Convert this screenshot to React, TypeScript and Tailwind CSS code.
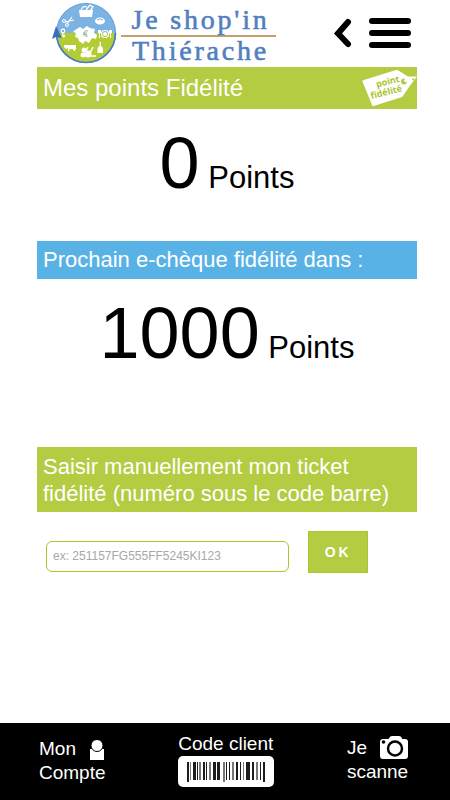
import React from 'react';

const bars: [number, number][] = [
  [0, 2], [3, 1], [6, 3], [10, 1], [12, 2], [16, 2], [19, 1], [22, 2], [26, 3],
  [30, 3], [36, 2], [39, 1], [42, 1], [45, 2], [49, 2], [53, 1], [56, 1], [59, 4],
  [65, 2], [69, 2], [73, 1], [76, 2],
];

function GlobeLogo() {
  return (
    <svg viewBox="0 0 68 66" className="h-[66px] w-[68px] shrink-0" aria-hidden="true">
      <path d="M7.500 33a29.500 29.500 0 0 1 59 0z" fill="#7db3e3" />
      <path d="M7.500 33a29.500 29.500 0 0 0 59 0z" fill="#b3cc35" />
      <circle cx="37" cy="33" r="29.500" fill="none" stroke="#6b9fd6" strokeWidth="1.200" />
      <path d="M7.500 33a29.500 29.500 0 0 0 59 0" fill="none" stroke="#4a7cc0" strokeWidth="1.600" />
      <path d="M7 26L3 39l4-2 6 1z" fill="#3c6fb7" />
      <g fill="#fff" stroke="#fff" transform="translate(2 0)">
        <path d="M24 30l5-3 3 2 4-3 3 2 5 1-1 4 3 2-1 4-4-1-3 5-4-2-2 3-4-3-1-3-3-1 1-4-3-1z" stroke="none" />
        <path d="M28 10h14l-1 7H29z" stroke="none" />
        <path d="M30 11q1-6 6-4M35 10l4-5 3 2-3 4" fill="none" strokeWidth="1.300" />
        <ellipse cx="49" cy="21" rx="5" ry="3.500" stroke="none" />
        <path d="M46 20q3-2 6 0" fill="none" stroke="#7db3e3" strokeWidth="1" />
        <circle cx="13" cy="21" r="1.500" fill="none" strokeWidth="1" />
        <circle cx="16" cy="25" r="1.500" fill="none" strokeWidth="1" />
        <path d="M14 22l9-2M16 24l5-7" fill="none" strokeWidth="1.200" />
        <circle cx="54" cy="34" r="3.500" fill="none" strokeWidth="1.200" />
        <circle cx="54" cy="34" r="2" stroke="none" />
        <path d="M48.500 30v8M59.500 30v8M47.500 30v3h2v-3M58.500 30v3h2v-3" fill="none" strokeWidth="1" />
        <circle cx="12" cy="31" r="1.800" fill="none" strokeWidth="1.200" />
        <path d="M12 33q-1 5 2 3M11 37l3-2" fill="none" strokeWidth="1.200" />
        <path d="M13 45h12v4l-1 1v1h-1.500v-2h-4v2H17v-3l-2 1-2-2z" stroke="none" />
        <path d="M48.500 42h1.500v4q2 1 2 3v4h-5.500v-4q0-2 2-3z" stroke="none" />
        <circle cx="33" cy="50" r="2.500" stroke="none" />
        <circle cx="37" cy="54" r="3.500" stroke="none" />
        <circle cx="32" cy="55" r="2.500" stroke="none" />
        <path d="M35 51l2-4M39 53l3-6M40 56h5" fill="none" strokeWidth="1.500" />
      </g>
      <path d="M39 31q-4-1-4 2.500t4 2.500M34 33h4M34 34.500h4" fill="none" stroke="#8cbca0" strokeWidth="1" />
    </svg>
  );
}

function TagIcon() {
  return (
    <svg viewBox="0 0 56 42" className="h-[42px] w-[56px] shrink-0" role="img" aria-label="point fidélité">
      <path d="M1.500 14.500q-.3-1 .7-1.300L35 3q1-.3 2 .2L47 9.500h9L48 20l-6 9q-.6 1-1.600 1.300L12.500 39q-1 .3-1.300-.6z" fill="#fff" />
      <circle cx="43" cy="14.500" r="3" fill="#b3cc42" />
      <circle cx="44.800" cy="13.500" r="1.700" fill="#fff" />
      <path d="M50.500 12.500l3-1.500-1 2.500z" fill="#a5c22d" />
      <g fill="#a8c52c" fontFamily="Open Sans, sans-serif" fontWeight="700" fontSize="9">
        <text transform="translate(16 20.500) rotate(-14)">point</text>
        <text transform="translate(10.500 32) rotate(-14)">fidélité</text>
      </g>
    </svg>
  );
}

function Points({ value }: { value: string }) {
  return (
    <p className="text-center text-[31px] leading-[84px]">
      <span className="text-[72px]">{value}</span> Points
    </p>
  );
}

export default function App() {
  return (
    <div className="flex min-h-screen flex-col bg-white font-['Liberation_Sans',Arial,sans-serif] text-black">
      <header className="flex h-[67px] items-start pr-[37px] pl-[49px]">
        <GlobeLogo />
        <h1 className="mt-1 ml-1 w-[155px] pl-1 text-center font-['Liberation_Serif',serif] text-[28px] tracking-widest whitespace-nowrap text-[#527fbe] [-webkit-text-stroke:0.6px_#527fbe]">
          <span className="-ml-1 block border-b-2 border-[#c5a06e] pl-1 leading-[31px]">Je shop'in</span>
          <span className="block leading-[28px]">Thiérache</span>
        </h1>
        <nav className="mt-4 ml-auto flex items-center gap-4">
          <button type="button" aria-label="Retour">
            <svg viewBox="0 0 20 34" className="h-[34px] w-5" fill="none" stroke="#000" strokeWidth="6" strokeLinecap="round" aria-hidden="true">
              <path d="M15 6L5 17.500L15 28" />
            </svg>
          </button>
          <button type="button" aria-label="Menu">
            <svg viewBox="0 0 44 34" className="h-[34px] w-11" stroke="#000" strokeWidth="6" strokeLinecap="round" aria-hidden="true">
              <path d="M3 5h36M3 17h36M3 29h36" />
            </svg>
          </button>
        </nav>
      </header>

      <main className="flex-1 pr-[33px] pl-[37px]">
        <section className="h-[174px]">
          <h2 className="flex h-[42px] items-center justify-between bg-[#b3cc42] pl-1.5 text-[24px] text-white">
            Mes points Fidélité
            <TagIcon />
          </h2>
          <div className="pt-3">
            <Points value="0" />
          </div>
        </section>

        <section className="h-[206px]">
          <h2 className="h-[38px] bg-[#59b2e6] pl-1.5 text-[22px] leading-[38px] whitespace-nowrap text-white">
            Prochain e-chèque fidélité dans :
          </h2>
          <div className="pt-3">
            <Points value="1000" />
          </div>
        </section>

        <form onSubmit={(event) => event.preventDefault()}>
          <label htmlFor="ticket" className="block bg-[#b3cc42] pt-1.5 pb-[5px] pl-1.5 text-[22px] leading-[27px] text-white">
            Saisir manuellement mon ticket
            <br />
            fidélité (numéro sous le code barre)
          </label>
          <div className="flex items-center gap-[19px] pt-[19px] pl-[9px]">
            <input
              id="ticket"
              type="text"
              placeholder="ex: 251157FG555FF5245KI123"
              className="mt-2 h-[31px] w-[243px] rounded-md border border-[#a9c72b] bg-white px-1.5 text-[12px] placeholder:text-[#a8a8a8]"
            />
            <button type="submit" className="h-[42px] w-[60px] border border-[#a9c72b] bg-[#b3cc42] text-[14px] font-bold tracking-[0.2em] text-white">
              OK
            </button>
          </div>
        </form>
      </main>

      <footer className="flex h-[77px] items-start justify-between bg-black pr-[41px] pl-[39px] text-[19px] leading-[24px] text-white">
        <a href="#compte" className="block pt-[13px]">
          <span className="flex items-center gap-3.5">
            Mon
            <svg viewBox="0 0 14 21" className="mt-1 h-[21px] w-3.5" fill="#fff" aria-hidden="true">
              <path d="M0 9h14v11H0z" />
              <circle cx="7" cy="5.500" r="6" stroke="#000" strokeWidth="1" />
            </svg>
          </span>
          Compte
        </a>
        <a href="#code" className="block pt-[9px]">
          Code client
          <svg viewBox="0 0 96 31" className="h-[31px] w-24" aria-hidden="true">
            <rect width="96" height="31" rx="5" fill="#fff" />
            {bars.map(([x, width], index) => (
              <rect
                key={x}
                x={x + 9}
                y="6"
                width={width}
                height={x === 0 || x === 36 || x === 76 ? 20 : 18}
                fill={index % 3 === 1 ? '#777' : '#1c1c1c'}
              />
            ))}
          </svg>
        </a>
        <a href="#scanner" className="block pt-[13px]">
          <span className="flex items-center gap-3">
            Je
            <svg viewBox="0 0 30 24" className="h-6 w-[30px]" aria-hidden="true">
              <path d="M1 6q0-3 3-3h5q1 0 1.500-1.500T13 0h7q2 0 2.500 1.500T24 3h2q3 0 3 3v14q0 3-3 3H4q-3 0-3-3z" fill="#fff" />
              <circle cx="16" cy="12.500" r="7" fill="#fff" stroke="#000" strokeWidth="2.500" />
              <circle cx="4.500" cy="6" r="1.800" fill="#000" />
            </svg>
          </span>
          scanne
        </a>
      </footer>
    </div>
  );
}
